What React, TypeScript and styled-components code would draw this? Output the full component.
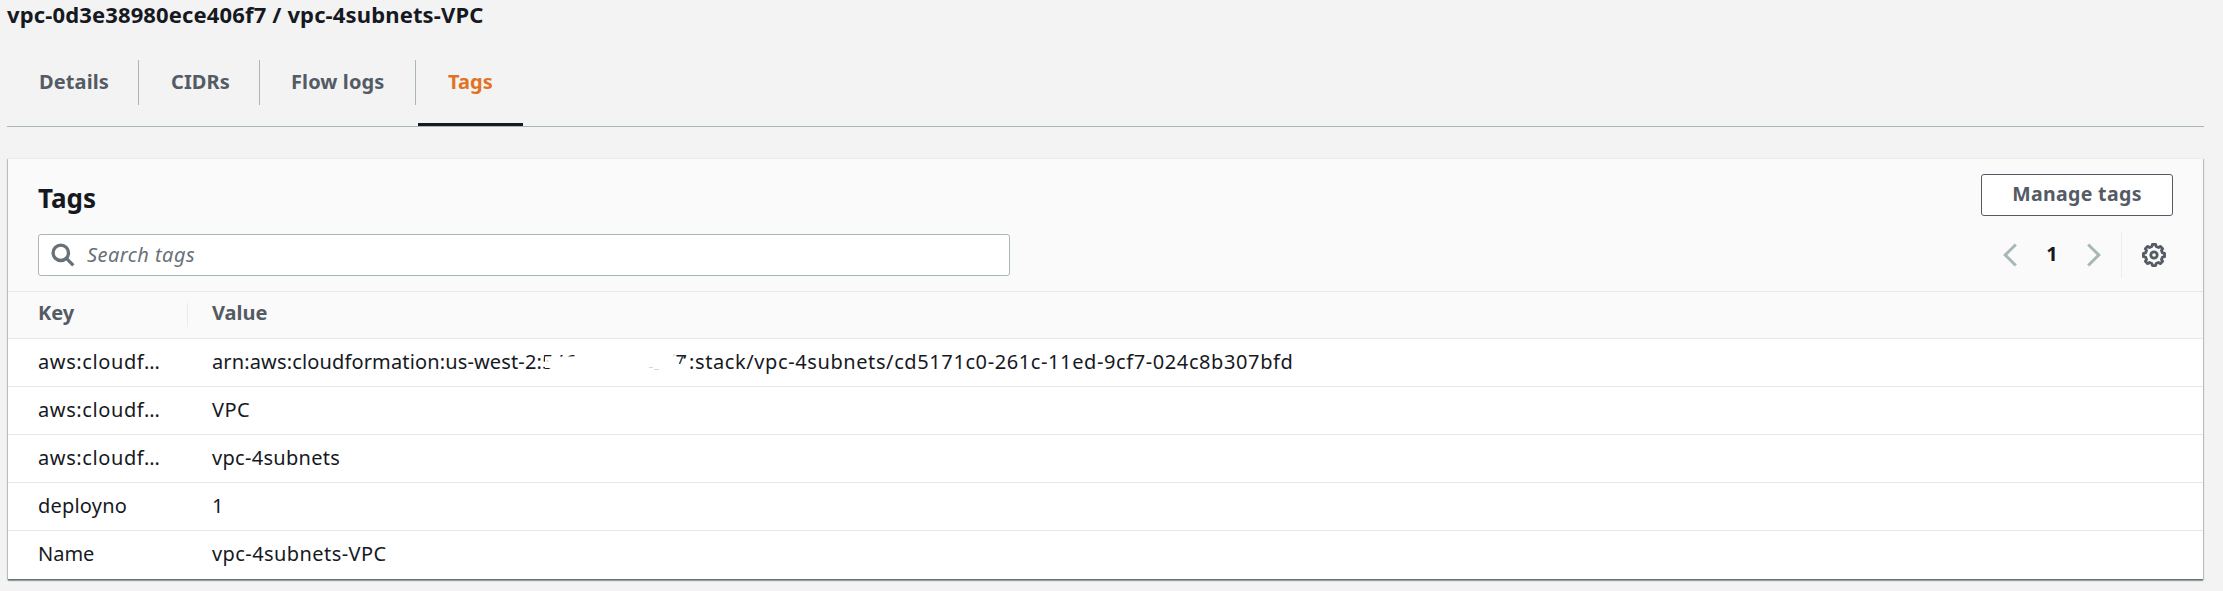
import React from "react";
import styled, { createGlobalStyle } from "styled-components";

const GlobalStyle = createGlobalStyle`
  * { box-sizing: border-box; }
  html, body { margin: 0; background: #f3f3f3; }
  body {
    font-family: "Noto Sans", "Open Sans", sans-serif;
    font-size: 20px;
    line-height: 30px;
    color: #16191f;
    overflow: hidden;
  }
  button { font: inherit; color: inherit; border: 0; background: none; padding: 0; margin: 0; }
`;

const Page = styled.main`
  height: 591px;
  width: 2223px;
  padding: 0 19px 0 7px;
  display: flex;
  flex-direction: column;
  background: #f3f3f3;
  overflow: hidden;
`;

const ResourceTitle = styled.h1`
  margin: 0;
  height: 60px;
  font-size: 22px;
  line-height: 28px;
  font-weight: 700;
  letter-spacing: 0.14px;
  white-space: nowrap;
`;

const TabList = styled.nav`
  display: flex;
  height: 67px;
  border-bottom: 1px solid #aab7b8;
`;

const Tab = styled.button<{ $width: number; $pad: number; $active?: boolean }>`
  width: ${(p) => p.$width}px;
  height: 66px;
  margin-left: ${(p) => (p.$active ? 2 : 0)}px;
  padding: 0 0 0 ${(p) => p.$pad}px;
  display: flex;
  text-align: left;
  font-weight: 700;
  letter-spacing: 0.1px;
  white-space: nowrap;
  color: ${(p) => (p.$active ? "#e07424" : "#545b64")};
  border-bottom: ${(p) => (p.$active ? "3px solid #16191f" : "0")};
`;

const TabLabel = styled.span<{ $divided?: boolean }>`
  flex: 1;
  height: 45px;
  line-height: 44px;
  border-right: ${(p) => (p.$divided ? "1px solid #aab7b8" : "0")};
`;

const Card = styled.section`
  margin: 31px 0 0 1px;
  width: 2195px;
  height: 421px;
  background: #fff;
  border-top: 1px solid #eaeded;
  box-shadow: 0 2px 1px 0 rgba(0, 28, 36, 0.35), 1px 1px 1px 0 rgba(0, 28, 36, 0.2),
    -1px 1px 1px 0 rgba(0, 28, 36, 0.2);
`;

const CardHeader = styled.header`
  height: 133px;
  padding: 15px 30px 0;
  background: #fafafa;
  border-bottom: 1px solid #e6e8e8;
`;

const HeadingRow = styled.div`
  display: flex;
  justify-content: space-between;
  height: 60px;
`;

const Heading = styled.h2`
  margin: 4px 0 0;
  font-size: 26px;
  line-height: 40px;
  font-weight: 700;
`;

const ManageButton = styled.button`
  width: 192px;
  height: 42px;
  border: 1px solid #545b64;
  border-radius: 3px;
  background: #fff;
  color: #545b64;
  font-size: 19.5px;
  font-weight: 700;
  letter-spacing: 0.35px;
  line-height: 38px;
  padding-bottom: 2px;
`;

const ToolRow = styled.div`
  display: flex;
  justify-content: space-between;
  height: 46px;
`;

const SearchField = styled.label`
  display: flex;
  align-items: center;
  width: 972px;
  height: 42px;
  padding-left: 12px;
  gap: 12px;
  background: #fff;
  border: 1px solid #aab7b8;
  border-radius: 3px;
`;

const Placeholder = styled.span`
  font-style: italic;
  letter-spacing: 0.45px;
  color: #687078;
  line-height: 38px;
`;

const Pager = styled.div`
  display: flex;
  align-items: center;
  height: 42px;
  padding-right: 7px;
`;

const PageNumber = styled.span`
  width: 70px;
  text-align: center;
  font-weight: 700;
  line-height: 38px;
  padding-bottom: 2px;
`;

const PagerDivider = styled.span`
  width: 1px;
  height: 46px;
  margin: 0 20px;
  background: #eaeded;
`;

const Row = styled.div<{ $head?: boolean; $last?: boolean }>`
  display: flex;
  align-items: center;
  height: ${(p) => (p.$head ? 47 : 48)}px;
  background: ${(p) => (p.$head ? "#fafafa" : "#fff")};
  border-bottom: ${(p) => (p.$last ? "0" : "1px solid #e6e8e8")};
  font-weight: ${(p) => (p.$head ? 700 : 400)};
  color: ${(p) => (p.$head ? "#545b64" : "#16191f")};
`;

const KeyCell = styled.div<{ $tracking?: number; $divided?: boolean }>`
  width: 180px;
  height: ${(p) => (p.$divided ? 24 : 30)}px;
  line-height: ${(p) => (p.$divided ? 20 : 28)}px;
  padding-left: 30px;
  border-right: 1px solid ${(p) => (p.$divided ? "#eaeded" : "transparent")};
  letter-spacing: ${(p) => p.$tracking ?? 0}px;
  white-space: nowrap;
`;

const ValueCell = styled.div<{ $tracking?: number; $head?: boolean }>`
  display: flex;
  height: ${(p) => (p.$head ? 24 : 30)}px;
  padding-left: 24px;
  line-height: ${(p) => (p.$head ? 20 : 28)}px;
  letter-spacing: ${(p) => p.$tracking ?? 0}px;
  white-space: nowrap;
`;

const ArnPrefix = styled.span`
  width: 330px;
  letter-spacing: 0.14px;
`;

const ArnSuffix = styled.span`
  letter-spacing: 0.6px;
`;

const Account = styled.span`
  position: relative;
  display: flex;
  justify-content: space-between;
  width: 147px;
  padding-right: 2px;
`;

const Eraser = styled.svg`
  position: absolute;
  left: 0;
  top: -1px;
`;

function SearchIcon() {
  return (
    <svg width="24" height="24" viewBox="0 0 24 24" fill="none" stroke="#687078" strokeWidth="3.3">
      <circle cx="9.8" cy="9.8" r="7.7" />
      <path d="M15.4 15.4 L22.3 22.3" />
    </svg>
  );
}

function Chevron({ flip }: { flip?: boolean }) {
  return (
    <svg width="14" height="24" viewBox="0 0 14 24" fill="none" stroke="#aab7b8" strokeWidth="3">
      <path d={flip ? "M1.2 1.5 L11.8 12 L1.2 22.5" : "M12.8 1.5 L2.2 12 L12.8 22.5"} />
    </svg>
  );
}

const gearPath = (() => {
  const points: string[] = [];
  for (let i = 0; i < 8; i++) {
    [[-14, 8.7], [-9, 10.7], [9, 10.7], [14, 8.7]].forEach(([offset, radius]) => {
      const a = ((i * 45 + offset) * Math.PI) / 180;
      points.push(`${(12 + radius * Math.cos(a)).toFixed(2)} ${(12 + radius * Math.sin(a)).toFixed(2)}`);
    });
  }
  return `M${points.join("L")}Z`;
})();

function GearIcon() {
  return (
    <svg width="24" height="24" viewBox="0 0 24 24" fill="none" stroke="#545b64" strokeLinejoin="round">
      <path d={gearPath} strokeWidth="2.8" />
      <circle cx="12" cy="12" r="3.2" strokeWidth="2.8" />
    </svg>
  );
}

function AccountId() {
  return (
    <Account>
      <span>546</span>
      <span>17</span>
      <Eraser width="147" height="30" viewBox="0 0 147 30">
        <path d="M3 9.6 H124 L136 10 L144 12 L141 17 L137 30 H9 V21 H3 Z" fill="#fff" />
        <path d="M13 6 H19 L18 10 H13 Z M31 6 L38 10 V6 Z M119 5 H131 V10 H119 Z" fill="#fff" />
        <path d="M141 8.5 L137.5 17" stroke="#39404a" strokeWidth="1.6" />
        <path d="M107 20.5 h4 M112 22.5 h5" stroke="#d5d8da" />
        <path d="M4.5 14 h2 M131 8 h2" stroke="#b9bcc0" />
      </Eraser>
    </Account>
  );
}

const rows = [
  { key: "aws:cloudf…", keyTracking: 0.6, value: "VPC", tracking: 0.5 },
  { key: "aws:cloudf…", keyTracking: 0.6, value: "vpc-4subnets", tracking: 0.3 },
  { key: "deployno", keyTracking: 0.2, value: "1", tracking: 0 },
  { key: "Name", keyTracking: 0, value: "vpc-4subnets-VPC", tracking: 0.42 },
];

export default function App() {
  return (
    <>
      <GlobalStyle />
      <Page>
        <ResourceTitle>vpc-0d3e38980ece406f7 / vpc-4subnets-VPC</ResourceTitle>
        <TabList>
          <Tab $width={132} $pad={32}><TabLabel $divided>Details</TabLabel></Tab>
          <Tab $width={121} $pad={32}><TabLabel $divided>CIDRs</TabLabel></Tab>
          <Tab $width={156} $pad={31}><TabLabel $divided>Flow logs</TabLabel></Tab>
          <Tab $width={105} $pad={30} $active><TabLabel>Tags</TabLabel></Tab>
        </TabList>
        <Card>
          <CardHeader>
            <HeadingRow>
              <Heading>Tags</Heading>
              <ManageButton>Manage tags</ManageButton>
            </HeadingRow>
            <ToolRow>
              <SearchField>
                <SearchIcon />
                <Placeholder>Search tags</Placeholder>
              </SearchField>
              <Pager>
                <Chevron />
                <PageNumber>1</PageNumber>
                <Chevron flip />
                <PagerDivider />
                <GearIcon />
              </Pager>
            </ToolRow>
          </CardHeader>
          <Row $head>
            <KeyCell $divided>Key</KeyCell>
            <ValueCell $head>Value</ValueCell>
          </Row>
          <Row>
            <KeyCell $tracking={0.6}>aws:cloudf…</KeyCell>
            <ValueCell>
              <ArnPrefix>arn:aws:cloudformation:us-west-2:</ArnPrefix>
              <AccountId />
              <ArnSuffix>:stack/vpc-4subnets/cd5171c0-261c-11ed-9cf7-024c8b307bfd</ArnSuffix>
            </ValueCell>
          </Row>
          {rows.map((row, i) => (
            <Row key={i} $last={i === rows.length - 1}>
              <KeyCell $tracking={row.keyTracking}>{row.key}</KeyCell>
              <ValueCell $tracking={row.tracking}>{row.value}</ValueCell>
            </Row>
          ))}
        </Card>
      </Page>
    </>
  );
}
